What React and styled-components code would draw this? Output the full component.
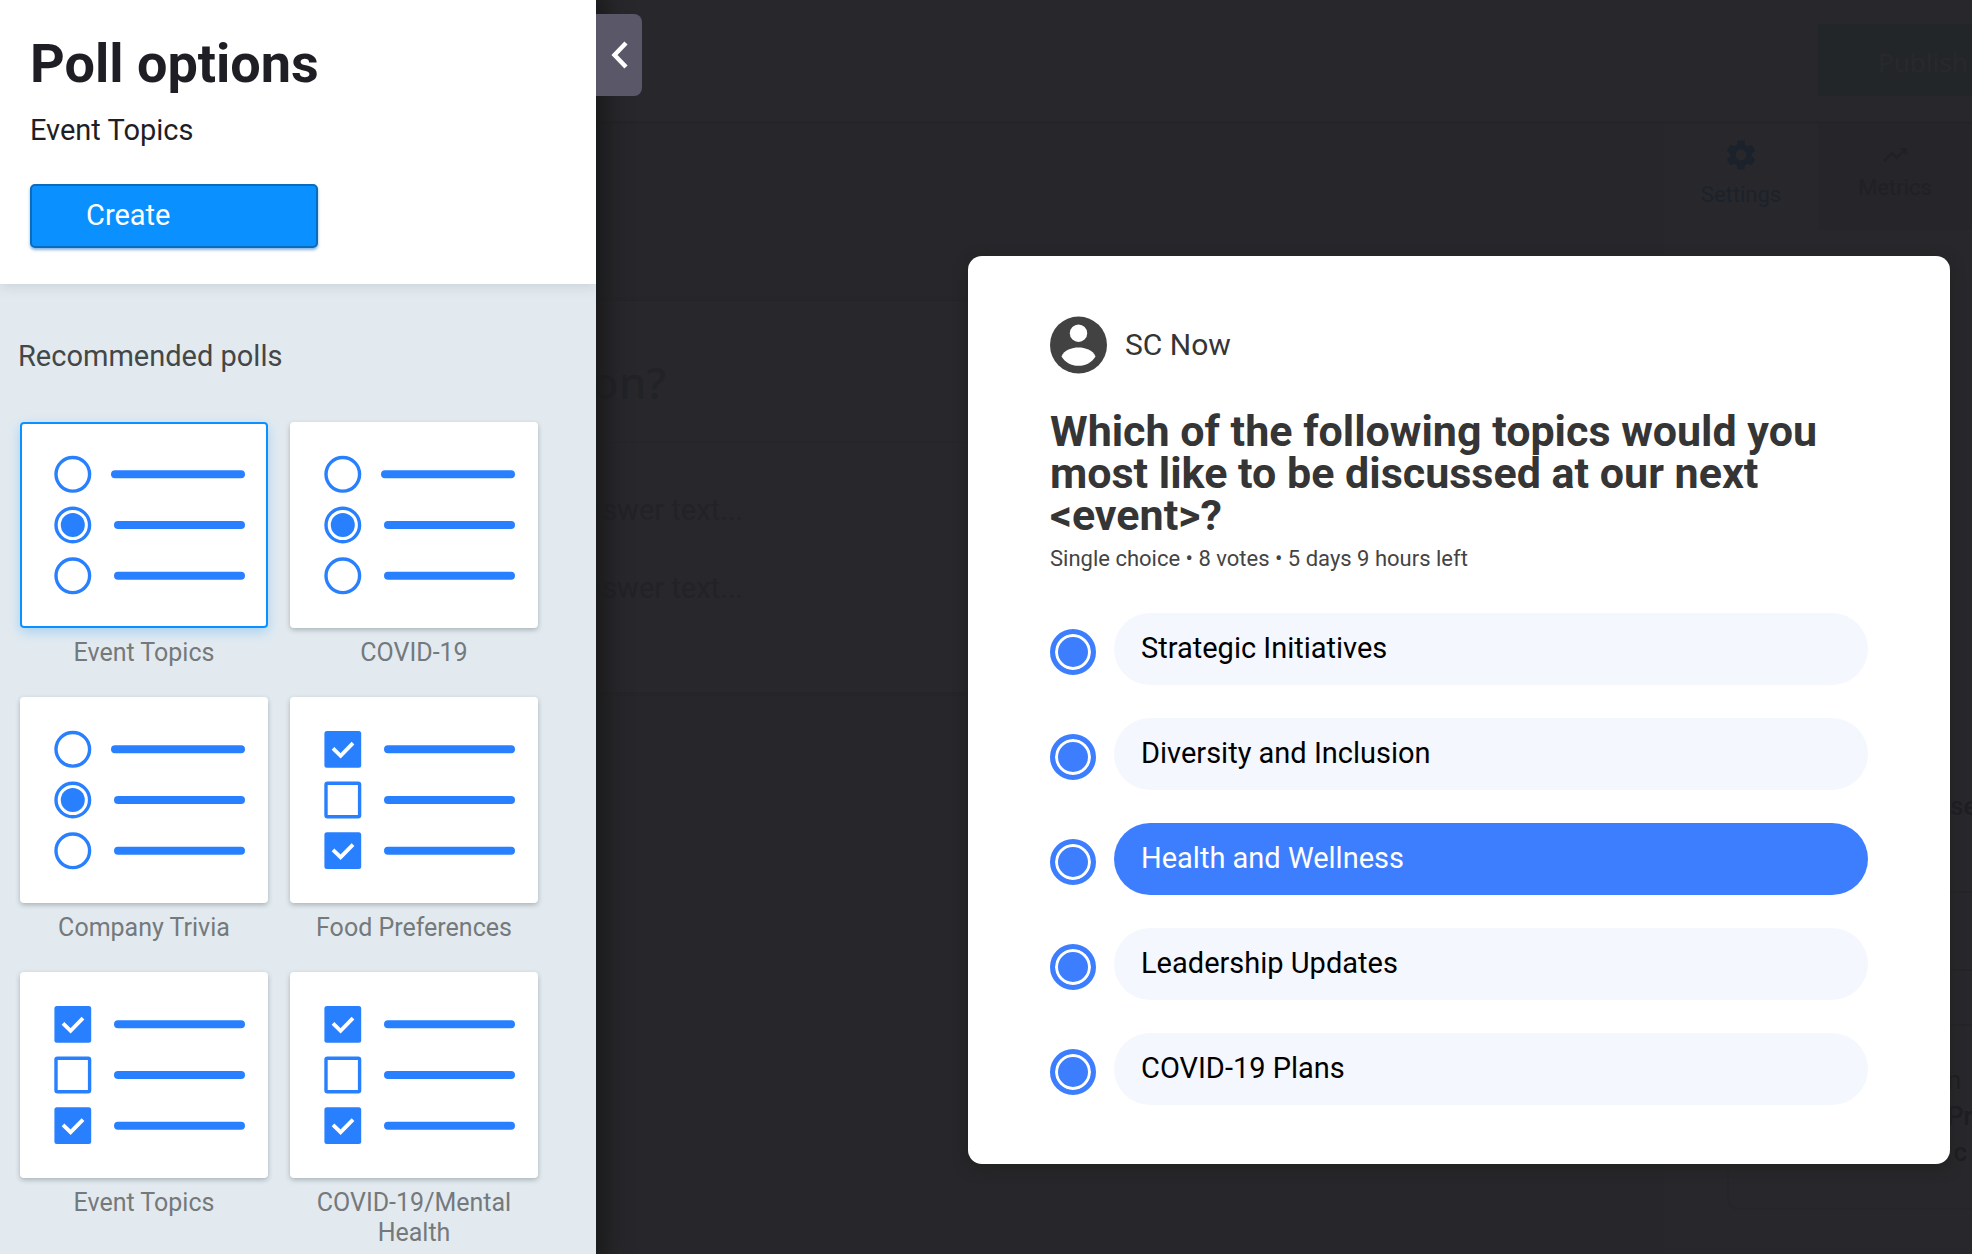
import { useState } from 'react'
import styled, { createGlobalStyle } from 'styled-components'
import { MdSettings, MdTrendingUp } from 'react-icons/md'

const templates = [
  { id: 1, name: 'Event Topics', type: 'single' },
  { id: 2, name: 'COVID-19', type: 'single' },
  { id: 3, name: 'Company Trivia', type: 'single' },
  { id: 4, name: 'Food Preferences', type: 'multiple' },
  { id: 5, name: 'Event Topics', type: 'multiple' },
  { id: 6, name: 'COVID-19/Mental Health', type: 'multiple' },
]

const answers = [
  'Strategic Initiatives',
  'Diversity and Inclusion',
  'Health and Wellness',
  'Leadership Updates',
  'COVID-19 Plans',
]

const SingleChoiceArt = () => (
  <Art viewBox="0 0 248 206" aria-hidden="true">
    <g fill="none" stroke="#2880ff" strokeWidth="3.4">
      <circle cx="52.8" cy="52.3" r="16.8" />
      <circle cx="52.8" cy="103" r="16.8" />
      <circle cx="52.8" cy="153.8" r="16.8" />
    </g>
    <circle cx="52.8" cy="103" r="12" fill="#2880ff" />
    <g fill="#2880ff">
      <rect x="91" y="48.3" width="134" height="8" rx="4" />
      <rect x="94" y="99" width="131" height="8" rx="4" />
      <rect x="94" y="149.8" width="131" height="8" rx="4" />
    </g>
  </Art>
)

const MultipleChoiceArt = () => (
  <Art viewBox="0 0 248 206" aria-hidden="true">
    <g fill="#2880ff">
      <rect x="34.4" y="34" width="36.8" height="36.8" rx="2.5" />
      <rect x="34.4" y="135.2" width="36.8" height="36.8" rx="2.5" />
      <rect x="94" y="48.3" width="131" height="8" rx="4" />
      <rect x="94" y="99" width="131" height="8" rx="4" />
      <rect x="94" y="149.8" width="131" height="8" rx="4" />
    </g>
    <rect x="36" y="86.2" width="33.6" height="33.6" rx="1.5" fill="none" stroke="#2880ff" strokeWidth="3.4" />
    <g fill="none" stroke="#fff" strokeWidth="3.8">
      <path d="M43 51.4 L50.6 58.8 L63 46.2" />
      <path d="M43 152.8 L50.6 160.2 L63 147.6" />
    </g>
  </Art>
)

const App = () => {
  const [template, setTemplate] = useState(1)
  const [answer, setAnswer] = useState('Health and Wellness')

  return (
    <Page>
      <GlobalStyle />
      <Drawer>
        <DrawerHeader>
          <Title>Poll options</Title>
          <Subtitle>Event Topics</Subtitle>
          <CreateButton type="button">Create</CreateButton>
        </DrawerHeader>
        <DrawerBody>
          <SectionTitle>Recommended polls</SectionTitle>
          <TemplateGrid>
            {templates.map((t) => (
              <Template key={t.id} type="button" onClick={() => setTemplate(t.id)}>
                <Thumb $active={t.id === template}>
                  {t.type === 'single' ? <SingleChoiceArt /> : <MultipleChoiceArt />}
                </Thumb>
                <TemplateName>{t.name}</TemplateName>
              </Template>
            ))}
          </TemplateGrid>
        </DrawerBody>
      </Drawer>

      <Stage>
        <TopBar>
          <PublishButton type="button">Publish</PublishButton>
        </TopBar>
        <Workspace>
          <Editor>
            <EditorCard>
              <EditorQuestion>on?</EditorQuestion>
              <EditorAnswers>
                <EditorAnswer>nswer text...</EditorAnswer>
                <EditorAnswer>nswer text...</EditorAnswer>
              </EditorAnswers>
            </EditorCard>
          </Editor>
          <Settings>
            <Tabs>
              <Tab type="button" $active>
                <MdSettings size={36} />
                Settings
              </Tab>
              <Tab type="button">
                <MdTrendingUp size={28} />
                Metrics
              </Tab>
            </Tabs>
            <SettingTitle>se</SettingTitle>
            <SettingRow $height={78} />
            <SettingRow $height={55} />
            <SettingBox>
              <span>n</span>
              <strong>Pro</strong>
              <strong>&nbsp;c</strong>
            </SettingBox>
          </Settings>
        </Workspace>

        <DrawerTab type="button" aria-label="Hide poll options">
          <svg width="18" height="28" viewBox="0 0 18 28" aria-hidden="true">
            <path d="M16 2 L4.500 14 L16 26" fill="none" stroke="#fff" strokeWidth="4.400" />
          </svg>
        </DrawerTab>

        <Overlay>
          <PollCard>
            <Author>
              <svg width="58" height="58" viewBox="0 0 58 58" aria-hidden="true">
                <circle cx="28.5" cy="29" r="28.5" fill="#424242" />
                <circle cx="28.5" cy="17.2" r="8.7" fill="#fff" />
                <path d="M11.5 40.5 C14 34 22 31.5 28.5 31.5 S43 34 45.5 40.5 C42 46.5 35.5 49.8 28.5 49.8 S15 46.5 11.5 40.5 Z" fill="#fff" />
              </svg>
              SC Now
            </Author>
            <Question>Which of the following topics would you most like to be discussed at our next &lt;event&gt;?</Question>
            <Meta>Single choice • 8 votes • 5 days 9 hours left</Meta>
            <Answers>
              {answers.map((text) => (
                <AnswerRow key={text}>
                  <Radio type="radio" name="answer" checked={answer === text} onChange={() => setAnswer(text)} />
                  <Pill $selected={answer === text}>{text}</Pill>
                </AnswerRow>
              ))}
            </Answers>
          </PollCard>
        </Overlay>
      </Stage>
    </Page>
  )
}

const GlobalStyle = createGlobalStyle`
  * {
    box-sizing: border-box;
  }

  body {
    margin: 0;
    background: #28272b;
    font-family: Roboto, "Liberation Sans", sans-serif;
  }

  button {
    font-family: inherit;
    border: 0;
    cursor: pointer;
  }

  h1, h2, p {
    margin: 0;
  }
`

const Page = styled.div`
  display: flex;
  min-height: 100vh;
  overflow: hidden;
`

const Drawer = styled.aside`
  display: flex;
  flex-direction: column;
  flex: 0 0 596px;
  z-index: 1;
  background: #e2eaf0;
  box-shadow: 4px 0 20px 6px rgba(22, 24, 24, 0.85);
`

const DrawerHeader = styled.header`
  padding: 32px 30px 36px;
  background: #fff;
  color: #1f1e24;
  box-shadow: 0 2px 12px rgba(60, 80, 80, 0.16);
  clip-path: inset(0 0 -16px 0);
`

const Title = styled.h1`
  font-size: 54px;
  line-height: 64px;
  font-weight: 700;
`

const Subtitle = styled.p`
  margin-top: 18px;
  font-size: 29px;
  line-height: 32px;
`

const CreateButton = styled.button`
  display: block;
  width: 288px;
  height: 64px;
  margin-top: 38px;
  padding: 0 54px 2px;
  border: 2px solid #0b6cbd;
  border-radius: 5px;
  background: #0a90ff;
  box-shadow: 0 2px 3px rgba(11, 108, 189, 0.5);
  color: #fff;
  font-size: 29px;
  line-height: 32px;
  text-align: left;
`

const DrawerBody = styled.section`
  flex: 1;
  padding: 56px 58px 6px 20px;
`

const SectionTitle = styled.h2`
  margin-left: -2px;
  color: #444748;
  font-size: 29px;
  line-height: 32px;
  font-weight: 400;
`

const TemplateGrid = styled.div`
  display: grid;
  grid-template-columns: 1fr 1fr;
  gap: 29px 22px;
  margin-top: 50px;
`

const Template = styled.button`
  display: flex;
  flex-direction: column;
  gap: 10px;
  padding: 0;
  background: none;
`

const Thumb = styled.span`
  display: block;
  width: 100%;
  height: 206px;
  border-radius: 4px;
  background: #fff;
  box-shadow: ${(p) =>
    p.$active
      ? 'inset 0 0 0 2px #0a90ff, 0 4px 12px rgba(10, 144, 255, 0.28)'
      : '0 2px 5px rgba(50, 65, 65, 0.32)'};
`

const Art = styled.svg`
  display: block;
  width: 100%;
  height: 100%;
`

const TemplateName = styled.span`
  width: 100%;
  color: #74797b;
  font-size: 25px;
  line-height: 30px;
  text-align: center;
`

const Stage = styled.main`
  position: relative;
  display: flex;
  flex-direction: column;
  flex: 1;
  min-width: 0;
`

const TopBar = styled.div`
  display: flex;
  justify-content: flex-end;
  height: 124px;
  padding-top: 24px;
  border-bottom: 3px solid #252428;
`

const PublishButton = styled.button`
  width: 154px;
  height: 72px;
  padding: 4px 0 0 60px;
  background: #222628;
  color: #29282d;
  font-family: "Noto Sans", sans-serif;
  font-size: 26px;
  text-align: left;
  white-space: nowrap;
`

const Workspace = styled.div`
  display: flex;
  flex: 1;
`

const Editor = styled.div`
  flex: 1;
  padding-top: 177px;
  background: #27262a;
`

const EditorCard = styled.div`
  height: 391px;
  background: #28272b;
  box-shadow: 0 0 3px #242327;
  color: #222327;
`

const EditorQuestion = styled.div`
  display: flex;
  justify-content: flex-end;
  align-items: center;
  width: 70px;
  height: 141px;
  padding-top: 20px;
  font-family: "Noto Sans", sans-serif;
  font-size: 44px;
  font-weight: 500;
`

const EditorAnswers = styled.div`
  padding-top: 51px;
  border-top: 1px solid #262529;
`

const EditorAnswer = styled.div`
  display: flex;
  justify-content: flex-end;
  width: 147px;
  height: 78px;
  font-size: 29px;
  line-height: 32px;
  white-space: nowrap;
`

const Settings = styled.aside`
  flex: 0 0 308px;
  overflow: hidden;
  background: #28272b;
  color: #1f1e22;
`

const Tabs = styled.div`
  display: grid;
  grid-template-columns: 1fr 1fr;
  height: 106px;
`

const Tab = styled.button`
  display: flex;
  flex-direction: column;
  align-items: center;
  gap: ${(p) => (p.$active ? 9 : 6)}px;
  padding: ${(p) => (p.$active ? 13 : 17)}px 0 0;
  background: ${(p) => (p.$active ? '#28272b' : '#262529')};
  color: ${(p) => (p.$active ? '#1c222b' : '#212023')};
  font-size: 22px;
  line-height: 26px;
`

const SettingTitle = styled.div`
  height: 663px;
  padding: 561px 0 0 286px;
  border-bottom: 2px solid #252428;
  font-size: 26px;
  font-weight: 500;
`

const SettingRow = styled.div`
  height: ${(p) => p.$height}px;
  border-bottom: 2px solid #252428;
`

const SettingBox = styled.div`
  display: flex;
  flex-direction: column;
  height: 184px;
  margin-left: 63px;
  padding: 36px 0 0 218px;
  border: 2px solid #262529;
  border-width: 0 0 2px 2px;
  border-radius: 0 0 0 12px;
  font-size: 26px;
  line-height: 36px;
  white-space: nowrap;

  strong {
    font-weight: 500;
  }
`

const DrawerTab = styled.button`
  position: absolute;
  top: 14px;
  left: 0;
  z-index: 2;
  display: flex;
  align-items: center;
  justify-content: center;
  width: 46px;
  height: 82px;
  padding: 0;
  border-radius: 0 8px 8px 0;
  background: #5a5768;
`

/* sits over the dimmed editor */
const Overlay = styled.div`
  position: absolute;
  inset: 0;
  display: flex;
  justify-content: flex-end;
  align-items: flex-start;
  padding: 256px 22px 90px;
`

const PollCard = styled.article`
  width: 100%;
  max-width: 982px;
  padding: 60px 82px 59px;
  border-radius: 14px;
  background: #fff;
  box-shadow: 0 4px 14px rgba(30, 32, 30, 0.8);
  color: #353535;
`

const Author = styled.div`
  display: flex;
  align-items: center;
  gap: 17px;
  height: 58px;
  font-size: 30px;
  line-height: 56px;
`

const Question = styled.h2`
  margin-top: 36px;
  font-size: 43px;
  line-height: 42px;
  font-weight: 700;
`

const Meta = styled.p`
  margin-top: 11px;
  color: #444;
  font-size: 22px;
  line-height: 24px;
`

const Answers = styled.div`
  display: flex;
  flex-direction: column;
  gap: 33px;
  margin-top: 42px;
`

const AnswerRow = styled.label`
  display: flex;
  align-items: center;
  gap: 18px;
  cursor: pointer;
`

const Radio = styled.input`
  appearance: none;
  flex: 0 0 46px;
  height: 46px;
  margin: 5px 0 0;
  border: 5px solid #3d7eff;
  border-radius: 50%;
  background: #3d7eff;
  box-shadow: inset 0 0 0 3px #fff;
`

const Pill = styled.span`
  flex: 1;
  height: 72px;
  padding: 18px 27px;
  border-radius: 36px;
  background: ${(p) => (p.$selected ? '#3d7eff' : '#f4f7fe')};
  color: ${(p) => (p.$selected ? '#fff' : '#000')};
  font-size: 29px;
  line-height: 34px;
`

export default App
